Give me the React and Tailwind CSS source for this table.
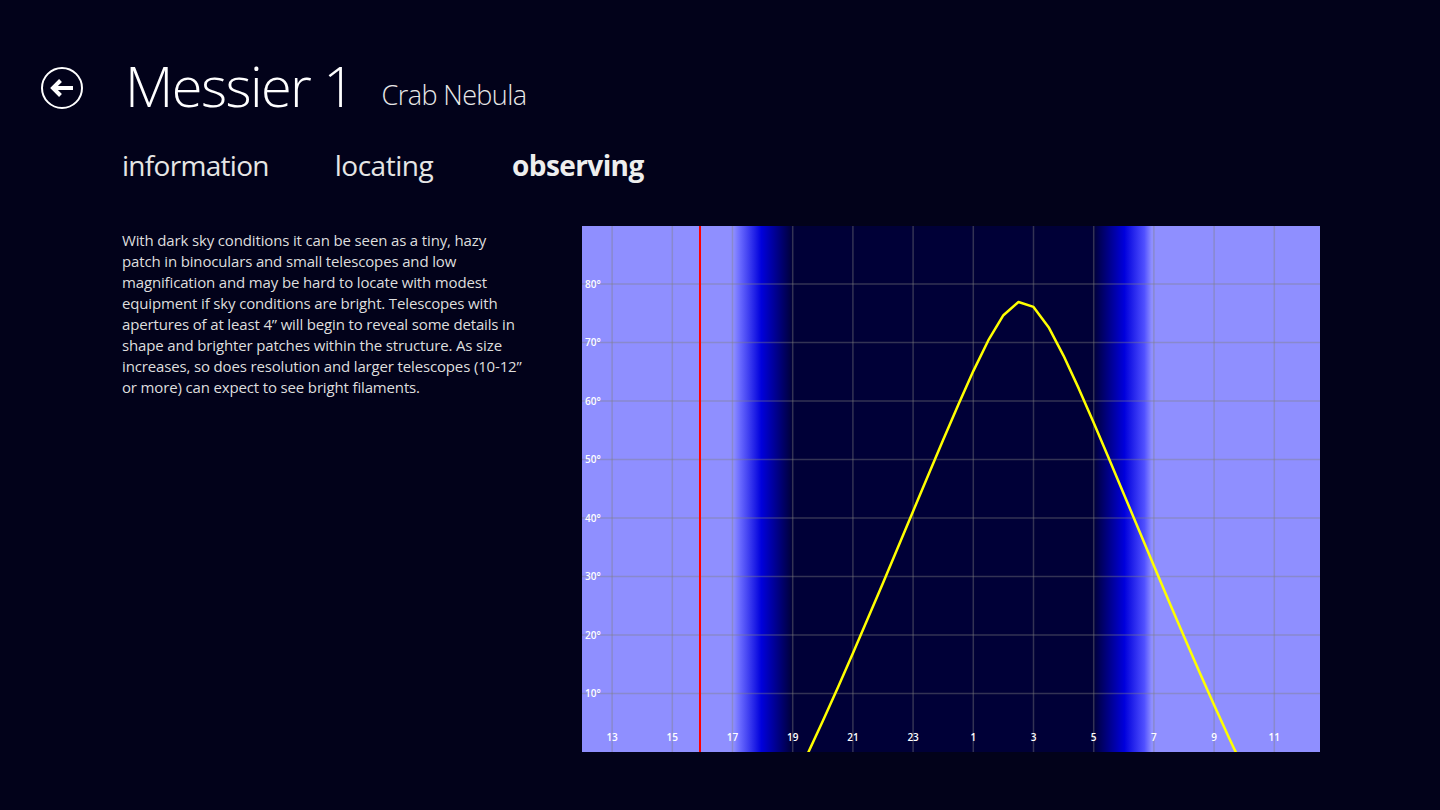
import React from 'react';

const CHART_W = 738;
const CHART_H = 526;
const HOUR_PX = 30.1;
const DEG_PX = 5.85;

// Crab Nebula altitude over the night, simple hour-angle model
const LAT = 35;
const DEC = 22.01;
const TRANSIT = 26.62;

function altitudeAt(h) {
  const r = Math.PI / 180;
  const ha = (h - TRANSIT) * 15 * r;
  const s = Math.sin(LAT * r) * Math.sin(DEC * r) + Math.cos(LAT * r) * Math.cos(DEC * r) * Math.cos(ha);
  return Math.asin(s) / r;
}

const curve = [];
for (let h = 12; h <= 36.5; h += 0.5) {
  curve.push(`${((h - 12) * HOUR_PX).toFixed(1)},${(CHART_H - altitudeAt(h) * DEG_PX).toFixed(1)}`);
}

const hourLabels = [13, 15, 17, 19, 21, 23, 1, 3, 5, 7, 9, 11];
const degLabels = [80, 70, 60, 50, 40, 30, 20, 10];

const description = [
  'With dark sky conditions it can be seen as a tiny, hazy',
  'patch in binoculars and small telescopes and low',
  'magnification and may be hard to locate with modest',
  'equipment if sky conditions are bright. Telescopes with',
  'apertures of at least 4” will begin to reveal some details in',
  'shape and brighter patches within the structure. As size',
  'increases, so does resolution and larger telescopes (10-12”',
  'or more) can expect to see bright filaments.',
];

function BackButton() {
  return (
    <button className="w-[42px] h-[42px] shrink-0 cursor-pointer">
      <svg width="42" height="42" viewBox="0 0 42 42" fill="none">
        <circle cx="21" cy="21" r="20" stroke="white" strokeWidth="2" />
        <path d="M32 21H13M19.5 13.5L12 21L19.5 28.5" stroke="white" strokeWidth="4" strokeLinejoin="miter" />
      </svg>
    </button>
  );
}

function AltitudeChart() {
  return (
    <svg width={CHART_W} height={CHART_H} viewBox={`0 0 ${CHART_W} ${CHART_H}`} className="block">
      <defs>
        <linearGradient id="sky" x1="0" x2="1" y1="0" y2="0">
          <stop offset="0.205" stopColor="#8f8fff" />
          <stop offset="0.214" stopColor="#6a6aff" />
          <stop offset="0.243" stopColor="#0000dc" />
          <stop offset="0.285" stopColor="#000037" />
          <stop offset="0.693" stopColor="#000037" />
          <stop offset="0.735" stopColor="#0000dc" />
          <stop offset="0.762" stopColor="#5050ff" />
          <stop offset="0.772" stopColor="#8f8fff" />
        </linearGradient>
        <clipPath id="plot">
          <rect width={CHART_W} height={CHART_H} />
        </clipPath>
      </defs>
      <rect width={CHART_W} height={CHART_H} fill="url(#sky)" />

      <g stroke="#808080" strokeOpacity="0.4" strokeWidth="1.5">
        {hourLabels.map((_, i) => (
          <line key={i} x1={30.1 + i * 60.2} x2={30.1 + i * 60.2} y1="0" y2={CHART_H} />
        ))}
        {degLabels.map((d) => (
          <line key={d} x1="0" x2={CHART_W} y1={CHART_H - d * DEG_PX} y2={CHART_H - d * DEG_PX} />
        ))}
      </g>

      <line x1="118" x2="118" y1="0" y2={CHART_H} stroke="#ff0000" strokeWidth="2" />

      <g clipPath="url(#plot)">
        <polyline points={curve.join(' ')} fill="none" stroke="#ffff00" strokeWidth="2.5" strokeLinejoin="round" />
      </g>

      <g fill="white" fontSize="10" fontFamily="'Open Sans', sans-serif" fontWeight="600">
        {degLabels.map((d) => (
          <text key={d} x="3" y={CHART_H - d * DEG_PX + 3.5}>{d}°</text>
        ))}
        {hourLabels.map((h, i) => (
          <text key={h} x={30.1 + i * 60.2} y="515" textAnchor="middle">{h}</text>
        ))}
      </g>
    </svg>
  );
}

export default function App() {
  return (
    <div className="min-h-screen w-full bg-[#02021a] text-white font-['Open_Sans','Noto_Sans',sans-serif] overflow-hidden">
      <header className="flex items-center pl-[41px] pt-[63px]">
        <BackButton />
        <h1 className="ml-[42px] text-[56px] font-light leading-none tracking-[-1.6px] -mt-[6px]">Messier 1</h1>
        <span className="ml-[28px] text-[27px] font-light leading-none tracking-[-0.6px] mt-[12px] text-[#e8e8e8]">Crab Nebula</span>
      </header>

      <nav className="flex items-center pl-[122px] mt-[38px] text-[28px] leading-none text-[#e6e6e6]">
        <span className="font-normal tracking-[-0.7px]">information</span>
        <span className="ml-[66px] font-normal tracking-[-0.5px]">locating</span>
        <span className="ml-[79px] font-bold tracking-[-0.6px] text-[#eeeeee]">observing</span>
      </nav>

      <main className="flex items-start mt-[47px]">
        <div className="pl-[122px] pt-[4px] w-[582px] text-[15px] leading-[21px] text-[#dedede]">
          {description.map((line) => (
            <p key={line} className="whitespace-nowrap tracking-[-0.15px]">{line}</p>
          ))}
        </div>
        <AltitudeChart />
      </main>
    </div>
  );
}
